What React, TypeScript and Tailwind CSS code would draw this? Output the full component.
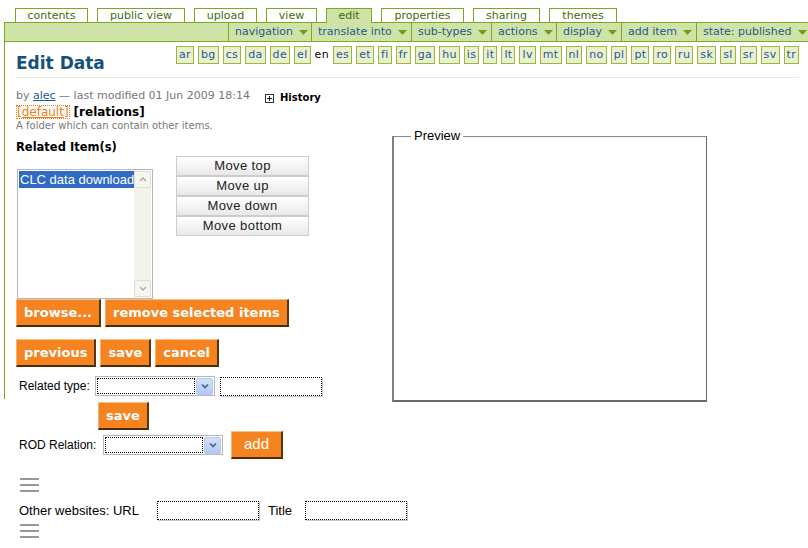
import React from "react";

const tabs = [
  { label: "contents", w: "w-[73px]" },
  { label: "public view", w: "w-[88px]" },
  { label: "upload", w: "w-[63px]" },
  { label: "view", w: "w-[51px]" },
  { label: "edit", w: "w-[46px]", active: true },
  { label: "properties", w: "w-[83px]" },
  { label: "sharing", w: "w-[67px]" },
  { label: "themes", w: "w-[68px]" },
];

const menus = [
  { label: "navigation", w: "w-[83px]" },
  { label: "translate into", w: "w-[100px]" },
  { label: "sub-types", w: "w-[80px]" },
  { label: "actions", w: "w-[65px]" },
  { label: "display", w: "w-[65px]" },
  { label: "add item", w: "w-[75px]" },
  { label: "state: published", w: "w-[112px]" },
];

const langs = [
  "ar", "bg", "cs", "da", "de", "el", "en", "es", "et", "fi", "fr", "ga", "hu", "is", "it",
  "lt", "lv", "mt", "nl", "no", "pl", "pt", "ro", "ru", "sk", "sl", "sr", "sv", "tr",
];

function Arrow() {
  return (
    <svg width="9" height="5" viewBox="0 0 9 5" className="shrink-0">
      <path d="M0 0h9L4.5 5z" fill="#6f9e16" />
    </svg>
  );
}

function Burger() {
  return (
    <svg width="20" height="14" viewBox="0 0 20 14" className="block">
      <rect x="0" y="0" width="19" height="2" fill="#999" />
      <rect x="0" y="6" width="19" height="2" fill="#999" />
      <rect x="0" y="12" width="19" height="2" fill="#999" />
    </svg>
  );
}

function OrangeButton({ children, bold = true, className = "" }: { children: React.ReactNode; bold?: boolean; className?: string }) {
  return (
    <button
      className={
        "h-[28px] px-[7px] bg-[#f5831f] text-white border-t border-l border-t-[#f9c08a] border-l-[#f9b070] border-r-2 border-b-2 border-r-[#5a3508] border-b-[#4a2c06] " +
        (bold
          ? "font-['DejaVu_Sans',sans-serif] font-bold text-[13px] "
          : "font-['Liberation_Sans',sans-serif] text-[15px] ") +
        className
      }
    >
      {children}
    </button>
  );
}

function XpSelect({ w }: { w: string }) {
  return (
    <div className={"h-[20px] flex items-center border border-[#b4b8bc] bg-white p-[1px] " + w}>
      <div className="flex-1 h-full border border-dotted border-black" />
      <div className="w-[17px] h-[17px] ml-[1px] rounded-[2px] border border-[#b6c8f2] bg-gradient-to-b from-[#d3e0fd] to-[#b2c7f6] flex items-center justify-center">
        <svg width="8" height="5" viewBox="0 0 8 5">
          <path d="M1 0.5L4 3.5L7 0.5" stroke="#4d6185" strokeWidth="1.6" fill="none" />
        </svg>
      </div>
    </div>
  );
}

function TextBox({ w }: { w: string }) {
  return <div className={"h-[19px] border border-dotted border-black bg-white shadow-[1px_1px_0_#c8c8c8] " + w} />;
}

export default function App() {
  return (
    <div className="w-[808px] h-[548px] bg-white overflow-hidden font-['DejaVu_Sans',sans-serif]">
      {/* tabs */}
      <div className="flex items-end gap-[9px] pl-[15px] pt-[8px]">
        {tabs.map((t) => (
          <div
            key={t.label}
            className={
              "border-x border-t border-[#7aab1e] text-[11px] leading-[13px] text-center text-[#456a08] " +
              t.w +
              (t.active ? " bg-[#cfe3a9] relative z-10 -mb-px h-[15px]" : " bg-white h-[14px]")
            }
          >
            {t.label}
          </div>
        ))}
      </div>

      {/* menu bar */}
      <div className="ml-[4px] h-[20px] border border-r-0 border-[#7aab1e] bg-[#cfe3a9] flex justify-end">
        {menus.map((m) => (
          <div
            key={m.label}
            className={"flex items-center gap-[6px] pl-[6px] border-l border-[#7aab1e] text-[11px] text-[#235a8e] " + m.w}
          >
            <span>{m.label}</span>
            <Arrow />
          </div>
        ))}
      </div>

      {/* bordered content */}
      <div className="ml-[4px] h-[357px] pt-[4px] border-l border-[#7aab1e] pl-[11px]">
        <div className="flex items-start h-[18px]">
          <div className="w-[160px] mt-[6px] text-[17px] leading-[22px] font-bold text-[#15507a]">Edit Data</div>
          <div className="flex items-center gap-[4px]">
            {langs.map((l) =>
              l === "en" ? (
                <span key={l} className="text-[11px] text-black tracking-[0.35px]">
                  en
                </span>
              ) : (
                <span
                  key={l}
                  className="h-[18px] px-[2px] border border-[#9db63a] bg-[#e9f0cf] text-[11px] leading-[16px] text-[#245a8d] tracking-[0.35px]"
                >
                  {l}
                </span>
              )
            )}
          </div>
        </div>

        <div className="mt-[13px] w-[783px] h-px bg-[#e6e9cf]" />

        <div className="mt-[11px] h-[14px] flex items-center text-[11px] leading-[14px] text-[#777]">
          <span>
            by <span className="text-[#235a8e] underline">alec</span> — last modified 01 Jun 2009 18:14
          </span>
          <span className="ml-[15px] relative top-[2px] flex items-center gap-[6px] text-[10px] font-bold text-black">
            <svg width="9" height="9" viewBox="0 0 9 9">
              <rect x="0.5" y="0.5" width="8" height="8" fill="white" stroke="#333" />
              <path d="M2 4.5h5M4.5 2v5" stroke="#111" />
            </svg>
            History
          </span>
        </div>

        <div className="mt-[2px] h-[14px] flex items-center gap-[4px] text-[12px] leading-[12px]">
          <span className="border border-dotted border-[#f07d1a] text-[#f07d1a] underline">[default]</span>
          <span className="font-bold text-black">[relations]</span>
        </div>

        <div className="text-[10px] leading-[13px] text-[#777]">A folder which can contain other items.</div>

        <div className="flex">
          {/* left column */}
          <div className="w-[376px]">
            <div className="mt-[8px] text-[11.5px] leading-[14px] font-bold text-black">Related Item(s)</div>
            <div className="mt-[2px] flex items-start">
              <div className="ml-px mt-[13px] w-[136px] h-[130px] border border-[#b5b5b5] bg-white flex p-px">
                <div className="flex-1">
                  <div className="h-[17px] bg-[#316ac5] text-white font-['Liberation_Sans',sans-serif] text-[13px] leading-[17px] pl-[1px] whitespace-nowrap overflow-hidden">
                    CLC data download
                  </div>
                </div>
                <div className="w-[17px] h-full bg-[#f4f2ec] flex flex-col justify-between">
                  <div className="h-[17px] rounded-[2px] border border-[#e0ddd2] bg-[#f6f5f0] flex items-center justify-center">
                    <svg width="8" height="5" viewBox="0 0 8 5">
                      <path d="M1 4L4 1L7 4" stroke="#b0ae9f" strokeWidth="1.5" fill="none" />
                    </svg>
                  </div>
                  <div className="h-[17px] rounded-[2px] border border-[#e0ddd2] bg-[#f6f5f0] flex items-center justify-center">
                    <svg width="8" height="5" viewBox="0 0 8 5">
                      <path d="M1 1L4 4L7 1" stroke="#b0ae9f" strokeWidth="1.5" fill="none" />
                    </svg>
                  </div>
                </div>
              </div>
              <div className="ml-[23px] flex flex-col w-[133px]">
                {["Move top", "Move up", "Move down", "Move bottom"].map((b) => (
                  <button
                    key={b}
                    className="h-[20px] border border-[#cccccc] bg-gradient-to-b from-white to-[#e8e8e8] font-['Liberation_Sans',sans-serif] text-[13px] leading-[18px] text-[#222] tracking-[0.4px]"
                  >
                    {b}
                  </button>
                ))}
              </div>
            </div>

            <div className="flex gap-[4px]">
              <OrangeButton>browse...</OrangeButton>
              <OrangeButton>remove selected items</OrangeButton>
            </div>
            <div className="mt-[12px] flex gap-[4px]">
              <OrangeButton>previous</OrangeButton>
              <OrangeButton>save</OrangeButton>
              <OrangeButton>cancel</OrangeButton>
            </div>

            <div className="mt-[9px] ml-[3px] flex items-center font-['Liberation_Sans',sans-serif] text-[12px] text-black">
              <span className="w-[76px]">Related type:</span>
              <XpSelect w="w-[120px]" />
              <div className="ml-[5px]">
                <TextBox w="w-[102px]" />
              </div>
            </div>
          </div>

          {/* preview */}
          <fieldset className="-mt-[3px] w-[315px] h-[273px] border-t border-r border-l-2 border-b-2 border-t-[#8a8a8a] border-r-[#666] border-l-[#808080] border-b-[#6a6a6a] px-[17px]">
            <legend className="px-[3px] font-['Liberation_Sans',sans-serif] text-[13px] leading-[14px] text-black">Preview</legend>
          </fieldset>
        </div>
      </div>

      {/* below */}
      <div className="flex pl-[98px] pt-[3px]">
        <OrangeButton>save</OrangeButton>
      </div>
      <div className="mt-px ml-[19px] flex items-center font-['Liberation_Sans',sans-serif] text-[12px] text-black">
        <span className="w-[84px]">ROD Relation:</span>
        <XpSelect w="w-[120px]" />
        <OrangeButton bold={false} className="ml-[8px] w-[52px]">
          add
        </OrangeButton>
      </div>

      <div className="mt-[19px] ml-[20px]">
        <Burger />
      </div>
      <div className="mt-[9px] ml-[19px] flex items-center font-['Liberation_Sans',sans-serif] text-[13px] text-black">
        <span className="w-[138px]">Other websites: URL</span>
        <TextBox w="w-[102px]" />
        <span className="ml-[9px] w-[37px]">Title</span>
        <TextBox w="w-[102px]" />
      </div>
      <div className="mt-[3px] ml-[20px]">
        <Burger />
      </div>
    </div>
  );
}
